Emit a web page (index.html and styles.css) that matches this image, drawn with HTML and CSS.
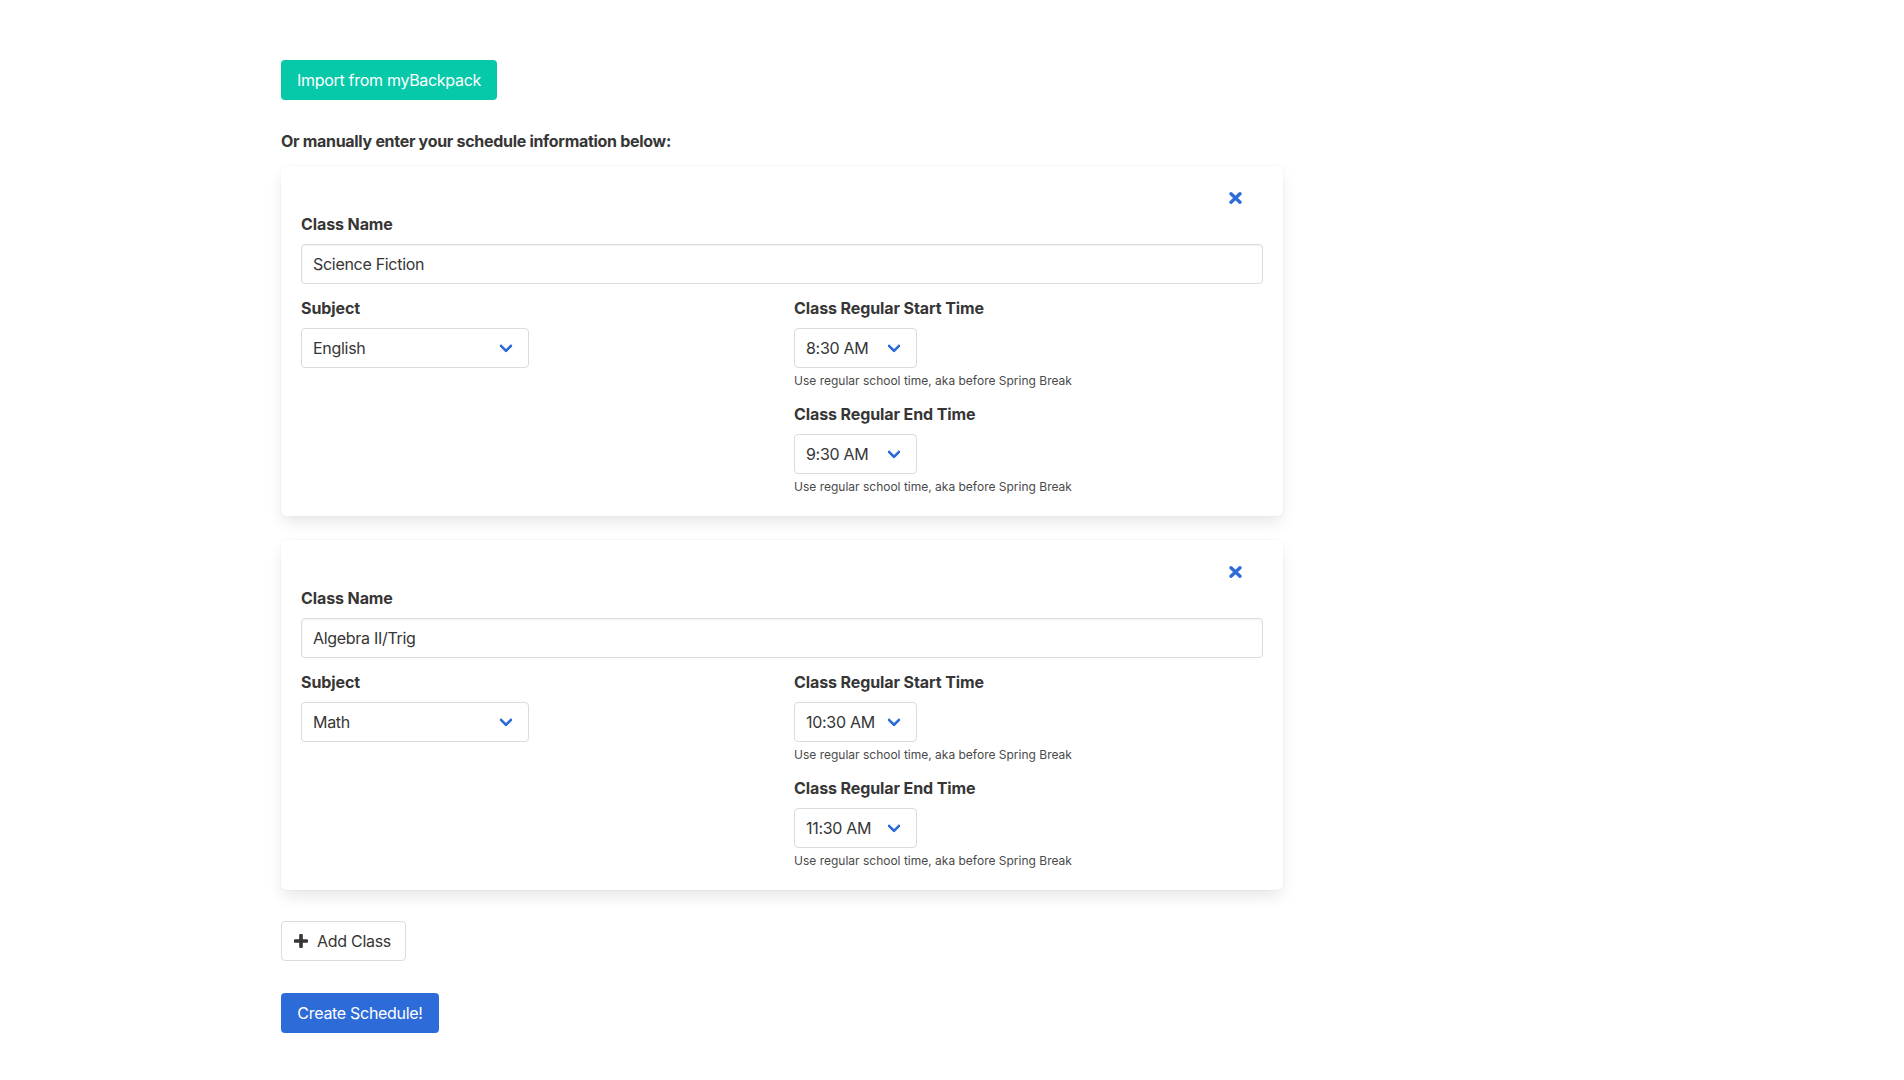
FILE: index.html
```html
<!DOCTYPE html>
<html lang="en">
<head>
<meta charset="utf-8">
<title>Schedule</title>
<link rel="stylesheet" href="styles.css">
</head>
<body>
<div class="page">
  <button class="button is-primary">Import from myBackpack</button>
  <p class="intro">Or manually enter your schedule information below:</p>

  <div class="box">
    <div class="remove-row">
      <span class="remove-icon">
        <svg width="13" height="12" viewBox="0 0 13 12"><path d="M2 1.8 L11 10.2 M11 1.8 L2 10.2" stroke="#2d6bd9" stroke-width="3.4" stroke-linecap="round"/></svg>
      </span>
    </div>
    <div class="field">
      <label class="label">Class Name</label>
      <input class="input" type="text" value="Science Fiction">
    </div>
    <div class="columns">
      <div class="column">
        <div class="field">
          <label class="label">Subject</label>
          <div class="select subject"><select><option>English</option><option>Math</option></select></div>
        </div>
      </div>
      <div class="column">
        <div class="field">
          <label class="label">Class Regular Start Time</label>
          <div class="select time"><select><option>8:30 AM</option></select></div>
          <p class="help">Use regular school time, aka before Spring Break</p>
        </div>
        <div class="field">
          <label class="label">Class Regular End Time</label>
          <div class="select time"><select><option>9:30 AM</option></select></div>
          <p class="help">Use regular school time, aka before Spring Break</p>
        </div>
      </div>
    </div>
  </div>

  <div class="box">
    <div class="remove-row">
      <span class="remove-icon">
        <svg width="13" height="12" viewBox="0 0 13 12"><path d="M2 1.8 L11 10.2 M11 1.8 L2 10.2" stroke="#2d6bd9" stroke-width="3.4" stroke-linecap="round"/></svg>
      </span>
    </div>
    <div class="field">
      <label class="label">Class Name</label>
      <input class="input" type="text" value="Algebra II/Trig">
    </div>
    <div class="columns">
      <div class="column">
        <div class="field">
          <label class="label">Subject</label>
          <div class="select subject"><select><option>Math</option><option>English</option></select></div>
        </div>
      </div>
      <div class="column">
        <div class="field">
          <label class="label">Class Regular Start Time</label>
          <div class="select time"><select><option>10:30 AM</option></select></div>
          <p class="help">Use regular school time, aka before Spring Break</p>
        </div>
        <div class="field">
          <label class="label">Class Regular End Time</label>
          <div class="select time"><select><option>11:30 AM</option></select></div>
          <p class="help">Use regular school time, aka before Spring Break</p>
        </div>
      </div>
    </div>
  </div>

  <div class="actions">
    <button class="button is-white-bordered">
      <span class="btn-icon">
        <svg width="14" height="14" viewBox="0 0 14 14"><path d="M7 1.5 V12.5 M1.5 7 H12.5" stroke="#363636" stroke-width="3.6" stroke-linecap="round"/></svg>
      </span>
      <span>Add Class</span>
    </button>
    <button class="button is-link">Create Schedule!</button>
  </div>
</div>
</body>
</html>
```

FILE: styles.css
```css
*, *::before, *::after { box-sizing: border-box; }
html, body { margin: 0; background: #fff; }
body {
  font-family: Inter, "Noto Sans", "Liberation Sans", sans-serif;
  font-size: 16px;
  line-height: 1.5;
  color: #4a4a4a;
  letter-spacing: -0.3px;
}
.page {
  display: flex;
  flex-direction: column;
  align-items: stretch;
  padding: 60px 0 40px 281px;
  width: 1283px;
}
.button {
  display: flex;
  align-items: center;
  justify-content: center;
  flex: none;
  height: 40px;
  padding: 0 14px;
  border: 1px solid transparent;
  border-radius: 4px;
  font-family: inherit;
  font-size: 16px;
  line-height: 1.5;
  letter-spacing: -0.3px;
  white-space: nowrap;
  cursor: pointer;
}
.is-primary { background: #05c9a8; color: #fff; width: 216px; }
.is-link { background: #2d6bd9; color: #fff; width: 158px; }
.is-white-bordered {
  background: #fff;
  border-color: #dbdbdb;
  color: #363636;
  width: 125px;
}
.btn-icon {
  display: inline-flex;
  width: 24px;
  height: 24px;
  align-items: center;
  justify-content: center;
  margin-left: -7px;
  margin-right: 4px;
}
.intro {
  margin: 29px 0 13px;
  font-weight: 700;
  color: #363636;
}
.box {
  background: #fff;
  border-radius: 6px;
  box-shadow: 0 8px 16px -2px rgba(10,10,10,.1), 0 0 0 1px rgba(10,10,10,.02);
  padding: 20px;
  margin-bottom: 24px;
}
.remove-row {
  display: flex;
  justify-content: flex-end;
  height: 26px;
}
.remove-icon {
  display: inline-flex;
  width: 24px;
  height: 24px;
  align-items: center;
  justify-content: center;
  margin-right: 16px;
}
.field { margin-bottom: 12px; }
.field:last-child { margin-bottom: 0; }
.label {
  display: block;
  font-weight: 700;
  color: #363636;
  letter-spacing: -0.1px;
  margin-bottom: 8px;
}
.input {
  display: block;
  width: 100%;
  height: 40px;
  padding: 7px 11px;
  border: 1px solid #dbdbdb;
  border-radius: 4px;
  box-shadow: inset 0 1px 2px rgba(10,10,10,.05);
  font-family: inherit;
  font-size: 16px;
  letter-spacing: -0.3px;
  color: #363636;
  background: #fff;
}
.columns {
  display: flex;
  margin: -12px;
}
.column {
  flex: 1 1 0;
  padding: 12px;
}
.select {
  position: relative;
  display: block;
  height: 40px;
}
.select::after {
  content: "";
  position: absolute;
  top: 50%;
  right: 18px;
  width: 10px;
  height: 10px;
  margin-top: -7px;
  border: 3px solid #2d6bd9;
  border-radius: 2px;
  border-right: 0;
  border-top: 0;
  transform: rotate(-45deg);
  pointer-events: none;
}
.select select {
  -webkit-appearance: none;
  appearance: none;
  display: block;
  width: 100%;
  height: 40px;
  padding: 7px 40px 7px 11px;
  border: 1px solid #dbdbdb;
  border-radius: 4px;
  background: #fff;
  font-family: inherit;
  font-size: 16px;
  letter-spacing: -0.3px;
  color: #363636;
  outline: none;
}
.subject { width: 228px; }
.time { width: 123px; }
.help {
  display: block;
  font-size: 12px;
  line-height: 1.5;
  letter-spacing: 0;
  margin: 4px 0 0;
  color: #4a4a4a;
}
.actions {
  display: flex;
  flex-direction: column;
  align-items: flex-start;
  gap: 32px;
  padding-top: 7px;
}
```
